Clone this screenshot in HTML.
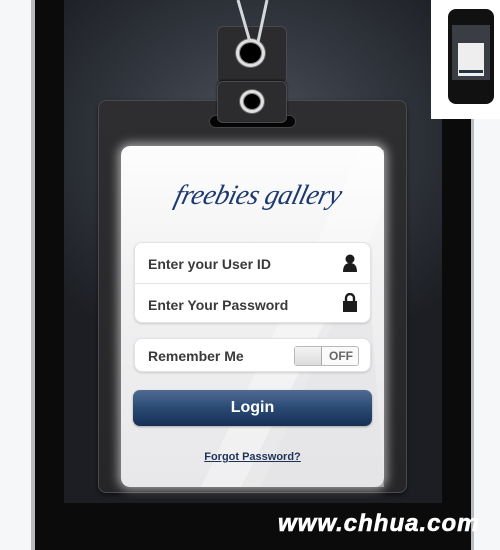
<!DOCTYPE html>
<html><head><meta charset="utf-8"><style>
*{margin:0;padding:0;box-sizing:border-box}
html,body{width:500px;height:550px;overflow:hidden}
body{background:#f6f7f8;position:relative;font-family:"Liberation Sans",Arial,sans-serif}
.abs{position:absolute}
.phone{left:31px;top:-20px;width:443px;height:590px;background:#0b0b0c;border-left:4px solid #b9bcbf;border-right:3px solid #b9bcbf}
.screen{left:64px;top:0;width:378px;height:503px;background:radial-gradient(ellipse 70% 45% at 50% 28%,#4c515c 0%,#30343c 55%,#1c1e23 100%)}
.badge{left:98px;top:100px;width:309px;height:393px;background:linear-gradient(#2e2e30,#262628);border:1px solid #4a4a4e;border-radius:8px;box-shadow:0 2px 4px rgba(0,0,0,.5)}
.card{left:121px;top:146px;width:263px;height:341px;border-radius:9px;background:linear-gradient(180deg,#fdfdfd 0%,#f1f1f2 40%,#e8e8ea 100%);box-shadow:0 0 10px 3px rgba(255,255,255,.55)}
.group{background:#fff;border-radius:8px;box-shadow:0 1px 2px rgba(0,0,0,.15);border:1px solid #e2e2e2}
.lbl{position:absolute;left:13px;font-weight:bold;font-size:14px;color:#3a3a3a}
.eye{position:absolute;border-radius:50%;background:#000;border:3px solid #e0e0e0;box-shadow:0 0 0 1px #666,inset 0 0 0 1px #888}
</style></head><body>
<div class="abs phone"></div>
<div class="abs screen"></div>
<div class="abs badge"></div>
<div class="abs" style="left:209px;top:115px;width:87px;height:13px;background:#050505;border-radius:7px;border:1px solid #444"></div>
<div class="abs" style="left:217px;top:26px;width:70px;height:58px;background:#2c2c2e;border:1px solid #4a4a4e;border-radius:6px"></div>
<div class="abs" style="left:217px;top:81px;width:70px;height:42px;background:#2c2c2e;border:1px solid #4a4a4e;border-radius:6px;box-shadow:0 -1px 2px rgba(0,0,0,.6)"></div>
<div class="eye" style="left:236px;top:39px;width:29px;height:28px"></div>
<div class="eye" style="left:240px;top:90px;width:24px;height:23px"></div>
<svg class="abs" style="left:230px;top:0" width="50" height="50"><path d="M8 0 L20 42 M37 0 L28 42" stroke="#d4d7db" stroke-width="3" fill="none"/></svg>
<div class="abs card">
  <svg class="abs" style="left:0;top:0" width="263" height="341"><path d="M240 4 L263 4 L263 60 L140 341 L80 341 Z" fill="#fff" opacity=".35"/><path d="M120 341 L245 95 L263 341 Z" fill="#e2e2e4" opacity=".5"/></svg>
  <div class="abs" style="left:54px;top:34px;font-family:'Liberation Serif',serif;font-style:italic;font-size:28px;color:#1d3a6f;letter-spacing:-0.5px;transform:skewX(-14deg)">freebies gallery</div>
  <div class="abs group" style="left:13px;top:96px;width:237px;height:81px">
    <div class="lbl" style="top:13px">Enter your User ID</div>
    <div class="abs" style="left:0;top:40px;width:235px;height:1px;background:#e4e4e4"></div>
    <div class="lbl" style="top:54px">Enter Your Password</div>
    <svg class="abs" style="left:207px;top:11px" width="16" height="18"><circle cx="8" cy="5" r="4.5" fill="#1c1c1c"/><path d="M1 18 Q1 9 8 9 Q15 9 15 18 Z" fill="#1c1c1c"/></svg>
    <svg class="abs" style="left:208px;top:50px" width="14" height="19"><path d="M3 9 V5 A4 4 0 0 1 11 5 V9" stroke="#1c1c1c" stroke-width="2.4" fill="none"/><rect x="0" y="8" width="14" height="11" fill="#1c1c1c"/></svg>
  </div>
  <div class="abs group" style="left:13px;top:192px;width:237px;height:34px">
    <div class="lbl" style="top:9px">Remember Me</div>
    <div class="abs" style="left:159px;top:7px;width:65px;height:20px;border:1px solid #b8b8b8;border-radius:3px;background:#fafafa">
      <div class="abs" style="left:0;top:0;width:27px;height:18px;background:linear-gradient(#f4f4f4,#dcdcdc);border-right:1px solid #aaa"></div>
      <div class="abs" style="left:34px;top:2px;font-size:12px;font-weight:bold;color:#666">OFF</div>
    </div>
  </div>
  <div class="abs" style="left:12px;top:244px;width:239px;height:36px;border-radius:7px;background:linear-gradient(#4f6b92 0%,#2a4a74 50%,#152f55 100%);box-shadow:0 1px 2px rgba(0,0,0,.3);color:#fff;font-weight:bold;font-size:16px;text-align:center;line-height:36px">Login</div>
  <div class="abs" style="left:0;top:305px;width:263px;text-align:center;font-size:11px;font-weight:bold;color:#1e3257;text-decoration:underline">Forgot Password?</div>
</div>
<div class="abs" style="left:278px;top:510px;font-size:24px;font-weight:bold;font-style:italic;color:#fff;font-family:'Liberation Sans',sans-serif;letter-spacing:1px;white-space:nowrap;-webkit-text-stroke:0.6px #fff">www.chhua.com</div>
<div class="abs" style="left:431px;top:0;width:69px;height:119px;background:#fff">
  <div class="abs" style="left:17px;top:9px;width:46px;height:95px;background:#111;border-radius:8px"></div>
  <div class="abs" style="left:21px;top:25px;width:38px;height:55px;background:#3a3d44"></div>
  <div class="abs" style="left:27px;top:43px;width:26px;height:33px;background:#eee"></div>
  <div class="abs" style="left:28px;top:70px;width:24px;height:3px;background:#234"></div>
</div>
</body></html>
